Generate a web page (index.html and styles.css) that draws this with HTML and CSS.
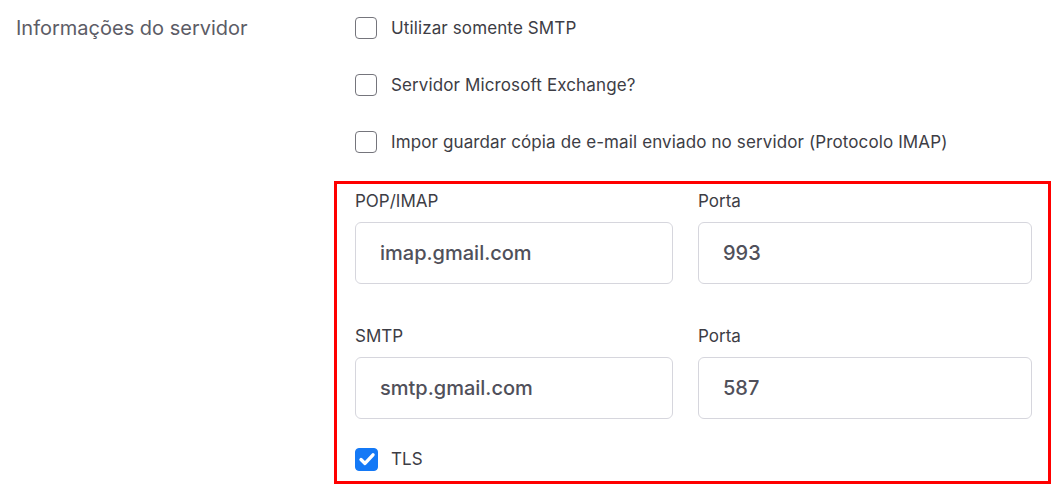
FILE: index.html
```html
<!DOCTYPE html>
<html lang="pt-BR">
<head>
<meta charset="utf-8">
<title>Informações do servidor</title>
<link rel="stylesheet" href="styles.css">
</head>
<body>
<div class="form-row">
  <div class="row-label">Informações do servidor</div>
  <div class="row-content">
    <div class="options">
      <label class="check"><span class="box"></span><span class="check-text">Utilizar somente SMTP</span></label>
      <label class="check"><span class="box"></span><span class="check-text">Servidor Microsoft Exchange?</span></label>
      <label class="check"><span class="box"></span><span class="check-text">Impor guardar cópia de e-mail enviado no servidor (Protocolo IMAP)</span></label>
    </div>
    <div class="server-box">
      <div class="grid">
        <div class="field">
          <div class="field-label">POP/IMAP</div>
          <input class="field-input" type="text" value="imap.gmail.com">
        </div>
        <div class="field">
          <div class="field-label">Porta</div>
          <input class="field-input" type="text" value="993">
        </div>
        <div class="field">
          <div class="field-label">SMTP</div>
          <input class="field-input" type="text" value="smtp.gmail.com">
        </div>
        <div class="field">
          <div class="field-label">Porta</div>
          <input class="field-input" type="text" value="587">
        </div>
      </div>
      <label class="check tls"><span class="box checked"><svg viewBox="0 0 20 20" width="20" height="20"><path d="M4 10.6 L8 14.4 L16 5.8" fill="none" stroke="#fff" stroke-width="3.4" stroke-linecap="round" stroke-linejoin="round"/></svg></span><span class="check-text">TLS</span></label>
    </div>
  </div>
</div>
</body>
</html>
```
FILE: styles.css
```css
* { box-sizing: border-box; }
html, body { margin: 0; padding: 0; background: #fff; }
body {
  font-family: Inter, "Noto Sans", "Liberation Sans", sans-serif;
  color: #3d3d45;
}
.form-row {
  display: grid;
  grid-template-columns: 334px 1fr;
  padding-top: 16px;
}
.row-label {
  padding-left: 16px;
  font-size: 20px;
  line-height: 24px;
  color: #5c5c66;
}
.options {
  display: flex;
  flex-direction: column;
  gap: 33px;
  padding-left: 21px;
}
.check {
  display: flex;
  align-items: center;
  height: 24px;
  font-size: 17px;
  line-height: 24px;
  letter-spacing: 0.12px;
  color: #3d3d45;
}
.check-text {
  padding-left: 1px;
}
.box {
  width: 22px;
  height: 22px;
  border: 1px solid #75757c;
  border-radius: 4px;
  margin-right: 13px;
  flex: none;
  display: flex;
  align-items: center;
  justify-content: center;
  background: #fff;
}
.box.checked {
  width: 23px;
  height: 23px;
  background: #1479f6;
  border-color: #1479f6;
  margin-right: 12px;
}
.server-box {
  margin-top: 27px;
  margin-right: 13px;
  border: 3px solid #ff0000;
  padding: 5px 16px 10px 18px;
}
.grid {
  display: grid;
  grid-template-columns: 318px 334px;
  column-gap: 25px;
  row-gap: 40px;
}
.field-label {
  font-size: 17px;
  line-height: 24px;
  color: #3d3d45;
  margin-bottom: 9px;
}
.field-input {
  display: block;
  width: 100%;
  height: 62px;
  border: 1px solid #d6d6dd;
  border-radius: 6px;
  padding: 0 24px;
  font-family: Inter, "Noto Sans", "Liberation Sans", sans-serif;
  font-size: 20px;
  font-weight: 500;
  color: #50505a;
  background: #fff;
  outline: none;
}
.tls {
  margin-top: 28px;
}
```
